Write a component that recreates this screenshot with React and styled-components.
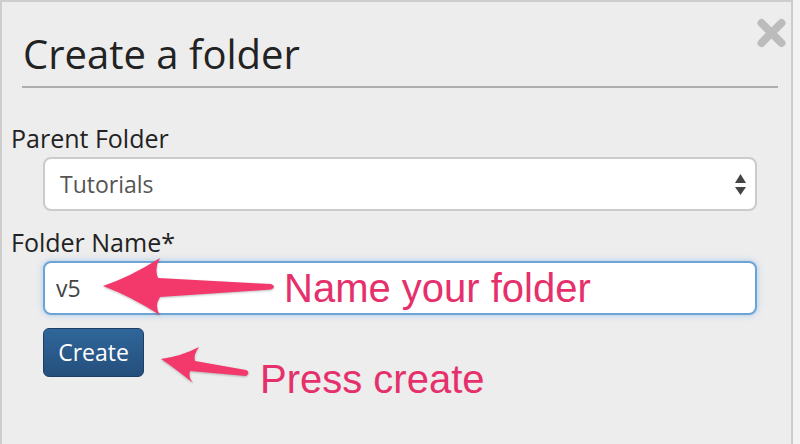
import React from "react";
import styled, { createGlobalStyle } from "styled-components";

const GlobalStyle = createGlobalStyle`
  body {
    margin: 0;
    background: #f3f3f3;
    font-family: "Open Sans", "Liberation Sans", sans-serif;
  }
`;

const Page = styled.div`
  width: 800px;
  height: 444px;
  overflow: hidden;
`;

const Modal = styled.div`
  position: relative;
  box-sizing: border-box;
  width: 793px;
  height: 444px;
  background: #ededed;
  border: 2px solid #cdcdcd;
  border-bottom: 0;
`;

const Header = styled.div`
  margin: 0 13px 0 20px;
  padding: 30px 0 10px;
  border-bottom: 2px solid #adadad;
`;

const Title = styled.h2`
  margin: 0;
  padding-left: 1px;
  font-size: 40px;
  line-height: 44px;
  font-weight: 400;
  color: #222;
`;

const CloseButton = styled.button`
  position: absolute;
  top: 16px;
  right: 5px;
  padding: 0;
  border: 0;
  background: transparent;
  display: flex;
`;

const Form = styled.div`
  padding: 33px 0 0 9px;
`;

const Label = styled.label`
  display: block;
  margin-top: ${(p) => (p.$first ? "0" : "14px")};
  margin-bottom: 2px;
  font-size: 25px;
  line-height: 34px;
  color: #222;
`;

const Control = styled.div`
  box-sizing: border-box;
  display: flex;
  align-items: center;
  justify-content: space-between;
  margin-left: 32px;
  width: 714px;
  height: 54px;
  background: #fff;
  border: 2px solid ${(p) => (p.$focused ? "#6ea3d8" : "#cbcbcb")};
  border-radius: 8px;
  box-shadow: ${(p) => (p.$focused ? "0 0 6px rgba(102, 170, 233, 0.55)" : "none")};
  padding: ${(p) => (p.$focused ? "0 11px" : "0 8px 0 15px")};
  font-size: 23px;
  color: ${(p) => (p.$focused ? "#444" : "#555")};
`;

const Button = styled.button`
  margin: 13px 0 0 32px;
  width: 101px;
  height: 49px;
  border: 1px solid #1c3f63;
  border-radius: 6px;
  background: linear-gradient(#30669a, #244f7c);
  color: #fff;
  font-family: "Open Sans", sans-serif;
  font-size: 23px;
  padding: 0 0 2px;
`;

const Note = styled.div`
  position: absolute;
  left: ${(p) => p.$x}px;
  top: ${(p) => p.$y}px;
  font-family: "Liberation Sans", Arial, sans-serif;
  font-size: 40px;
  line-height: 1;
  color: #e5306b;
  white-space: nowrap;
`;

const Arrows = styled.svg`
  position: absolute;
  left: -2px;
  top: -2px;
  pointer-events: none;
  filter: drop-shadow(0 1px 1px rgba(0, 0, 0, 0.25));
`;

const SelectArrows = () => (
  <svg width="13" height="23" viewBox="0 0 13 23">
    <path d="M1 10 L12 10 L6.5 1 Z" fill="#444" />
    <path d="M1 14 L12 14 L6.5 22 Z" fill="#444" />
  </svg>
);

export default function App() {
  return (
    <Page>
      <GlobalStyle />
      <Modal>
        <Header>
          <Title>Create a folder</Title>
        </Header>
        <CloseButton aria-label="Close">
          <svg width="29" height="30" viewBox="0 0 29 30">
            <path d="M4.5 5 L24.5 25 M24.5 5 L4.5 25" stroke="#bcbcbc" strokeWidth="8" strokeLinecap="round" />
          </svg>
        </CloseButton>

        <Form>
          <Label $first>Parent Folder</Label>
          <Control>
            <span>Tutorials</span>
            <SelectArrows />
          </Control>

          <Label>Folder Name*</Label>
          <Control $focused>
            <span>v5</span>
          </Control>

          <Button>Create</Button>
        </Form>

        <Arrows width="800" height="444" viewBox="0 0 800 444">
          <path
            d="M103 286 Q130 277 160 258 Q154 268 158 278 L271 284 Q277 286.5 271 289.5 L160 297 Q154 306 160 315 Q130 296 103 286 Z"
            fill="#f3386c"
          />
          <path
            d="M161 359 Q182 356 199 347 Q193 355 195 361 L246 370 Q251 372.5 246 376 L190 371 Q188 377 193 383 Q176 369 161 359 Z"
            fill="#f3386c"
          />
        </Arrows>

        <Note $x={282} $y={266}>Name your folder</Note>
        <Note $x={258} $y={357}>Press create</Note>
      </Modal>
    </Page>
  );
}
